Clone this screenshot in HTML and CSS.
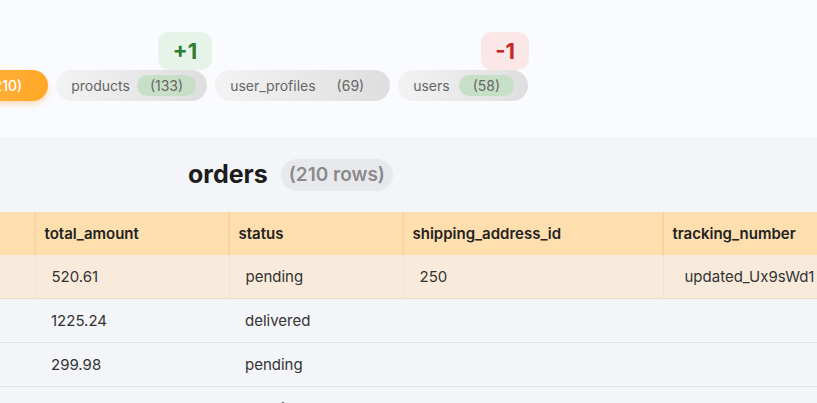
FILE: index.html
```html
<!DOCTYPE html>
<html>
<head>
<meta charset="utf-8">
<link rel="stylesheet" href="styles.css">
</head>
<body>
<div class="page">
  <header class="top">
    <nav class="tabs">
      <div class="tab tab-active">orders <span class="count">(210)</span></div>
      <div class="tab tab-tight">products <span class="count count-green">(133)</span><span class="delta delta-up">+1</span></div>
      <div class="tab">user_profiles <span class="count">(69)</span></div>
      <div class="tab tab-wide">users <span class="count count-green">(58)</span><span class="delta delta-down">-1</span></div>
    </nav>
  </header>
  <section class="content">
    <div class="title-row">
      <h1 class="title">orders</h1>
      <span class="rows-badge">(210 rows)</span>
    </div>
    <div class="table-wrap">
      <table class="grid">
        <colgroup>
          <col class="c0"><col class="c1"><col class="c2"><col class="c3"><col class="c4">
        </colgroup>
        <thead>
          <tr><th></th><th>total_amount</th><th>status</th><th>shipping_address_id</th><th>tracking_number</th></tr>
        </thead>
        <tbody>
          <tr class="hl"><td></td><td>520.61</td><td>pending</td><td>250</td><td class="wide">updated_Ux9sWd1</td></tr>
          <tr><td></td><td>1225.24</td><td>delivered</td><td></td><td></td></tr>
          <tr><td></td><td>299.98</td><td>pending</td><td></td><td></td></tr>
          <tr><td></td><td>899.99</td><td>pending</td><td></td><td></td></tr>
        </tbody>
      </table>
    </div>
  </section>
</div>
</body>
</html>
```
FILE: styles.css
```css
html, body {
  margin: 0;
  padding: 0;
  overflow: hidden;
}
body {
  font-family: Inter, "Noto Sans", sans-serif;
  background: #f4f5f8;
  width: 817px;
  height: 403px;
}
.page {
  width: 817px;
  overflow: hidden;
}
.top {
  height: 137px;
  background: #fafbff;
  box-sizing: border-box;
  padding-top: 70px;
}
.tabs {
  display: flex;
  gap: 8px;
  margin-left: -91px;
}
.tab {
  position: relative;
  display: flex;
  align-items: center;
  height: 31px;
  box-sizing: border-box;
  padding: 0 13px 0 15px;
  border-radius: 16px;
  background: linear-gradient(90deg, #f3f3f3, #dedede);
  color: #666;
  font-size: 14px;
  white-space: nowrap;
}
.tab-tight {
  padding-right: 11px;
}
.tab-tight .count {
  margin-left: 7px;
}
.tab-wide {
  padding-right: 14px;
}
.tab-wide .count {
  margin-left: 9px;
  padding: 0 14px;
}
.tab-active {
  background: linear-gradient(90deg, #ffbb55, #ffa726);
  color: #fff;
  font-weight: 500;
  box-shadow: 0 3px 6px rgba(255, 160, 40, 0.35);
}
.count {
  margin-left: 8px;
  padding: 0 13px;
  height: 21px;
  line-height: 21px;
  border-radius: 11px;
}
.count-green {
  background: #c7dfc6;
}
.delta {
  position: absolute;
  top: -38px;
  right: -5px;
  height: 38px;
  line-height: 38px;
  padding: 0 15px;
  border-radius: 11px;
  font-size: 22px;
  font-weight: 700;
}
.delta-up {
  background: #e6f3e8;
  color: #2e7d32;
}
.delta-down {
  right: -1px;
  background: #fbe6e8;
  color: #c62828;
  padding: 0 14px;
}
.content {
  background: #f4f5f8;
}
.title-row {
  height: 75px;
  display: flex;
  align-items: center;
  padding-left: 188px;
  gap: 13px;
  box-sizing: border-box;
}
.title {
  margin: 0;
  font-size: 25px;
  font-weight: 700;
  color: #1c1c1c;
  padding-bottom: 2px;
}
.rows-badge {
  height: 32px;
  line-height: 32px;
  padding: 0 8px;
  border-radius: 16px;
  background: #e8e9ec;
  color: #8a8a8a;
  font-size: 19px;
  font-weight: 600;
}
.table-wrap {
  width: 817px;
  overflow: hidden;
}
.grid {
  table-layout: fixed;
  border-collapse: collapse;
  width: 963px;
  font-size: 15px;
}
.c0 { width: 35px; }
.c1 { width: 194px; }
.c2 { width: 174px; }
.c3 { width: 260px; }
.c4 { width: 300px; }
.grid th {
  height: 43px;
  background: #ffdfae;
  color: #222;
  font-weight: 600;
  font-size: 15px;
  text-align: left;
  padding: 0 9px;
  border-right: 1px solid #f4d09c;
  box-shadow: 0 2px 2px rgba(0, 0, 0, 0.08);
  white-space: nowrap;
}
.grid td {
  height: 43px;
  padding: 0 16px;
  color: #333;
  border-bottom: 1px solid #e0e1e5;
  white-space: nowrap;
  overflow: hidden;
}
.grid tr.hl td {
  background: #f8ebdb;
  border-bottom-color: #efdcc4;
  border-right: 1px solid #f2e3d1;
}
.grid td.wide {
  padding-left: 21px;
}
```
